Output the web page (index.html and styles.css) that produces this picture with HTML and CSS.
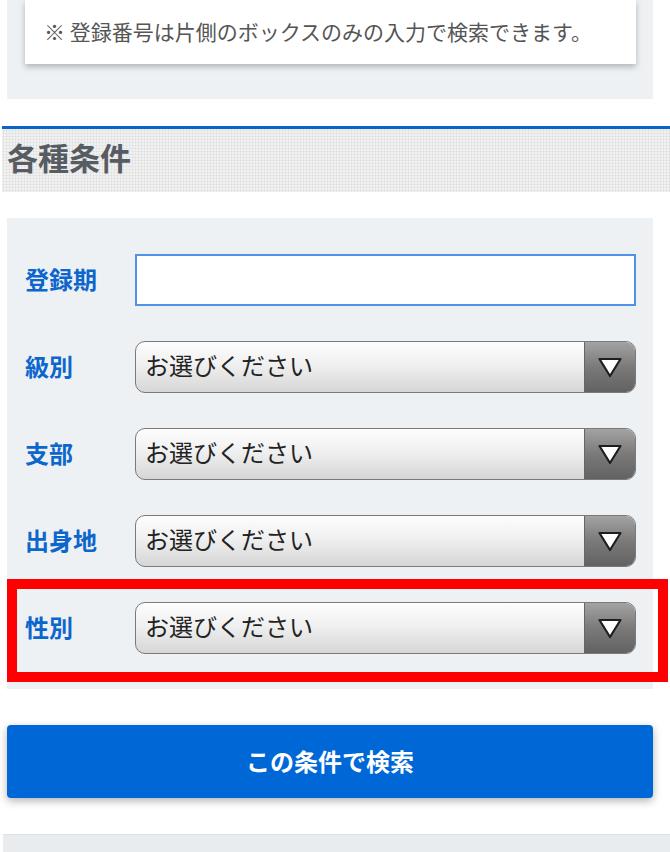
FILE: index.html
```html
<!DOCTYPE html>
<html lang="ja">
<head>
<meta charset="UTF-8">
<meta name="viewport" content="width=device-width, initial-scale=1.0">
<title>各種条件</title>
<link rel="stylesheet" href="styles.css">
</head>
<body>
  <div class="note-panel">
    <div class="note-card">
      <p>※ 登録番号は片側のボックスのみの入力で検索できます。</p>
    </div>
  </div>

  <h2 class="section-title">各種条件</h2>

  <form class="cond-panel" onsubmit="return false">
    <div class="row">
      <label class="row-label" for="term">登録期</label>
      <input class="text-input" type="text" id="term">
    </div>
    <div class="row">
      <label class="row-label" for="grade">級別</label>
      <div class="select-box">
        <select id="grade"><option>お選びください</option></select>
        <span class="select-arrow"><svg width="26" height="24" viewBox="0 0 26 24"><path d="M2.5 4 L23.5 4 L13 21 Z" fill="#fff" stroke="#1e1e1e" stroke-width="2.2" stroke-linejoin="round"/></svg></span>
      </div>
    </div>
    <div class="row">
      <label class="row-label" for="branch">支部</label>
      <div class="select-box">
        <select id="branch"><option>お選びください</option></select>
        <span class="select-arrow"><svg width="26" height="24" viewBox="0 0 26 24"><path d="M2.5 4 L23.5 4 L13 21 Z" fill="#fff" stroke="#1e1e1e" stroke-width="2.2" stroke-linejoin="round"/></svg></span>
      </div>
    </div>
    <div class="row">
      <label class="row-label" for="home">出身地</label>
      <div class="select-box">
        <select id="home"><option>お選びください</option></select>
        <span class="select-arrow"><svg width="26" height="24" viewBox="0 0 26 24"><path d="M2.5 4 L23.5 4 L13 21 Z" fill="#fff" stroke="#1e1e1e" stroke-width="2.2" stroke-linejoin="round"/></svg></span>
      </div>
    </div>
    <div class="row">
      <label class="row-label" for="sex">性別</label>
      <div class="select-box">
        <select id="sex"><option>お選びください</option></select>
        <span class="select-arrow"><svg width="26" height="24" viewBox="0 0 26 24"><path d="M2.5 4 L23.5 4 L13 21 Z" fill="#fff" stroke="#1e1e1e" stroke-width="2.2" stroke-linejoin="round"/></svg></span>
      </div>
    </div>
    <!-- 注目枠 -->
    <div class="highlight"></div>
  </form>

  <button class="search-btn" type="button">この条件で検索</button>

  <div class="bottom-panel"></div>
</body>
</html>
```

FILE: styles.css
```css
:root {
  --blue: #0068d6;
  --panel: #edf1f4;
  --label: #0c66cc;
}

body {
  margin: 0;
  width: 670px;
  font-family: "Noto Sans CJK JP", "Noto Sans", sans-serif;
  background: #fff;
  color: #333;
}

.note-panel {
  margin: 0 17px 0 7px;
  padding: 0 17px 35px 18px;
  background: var(--panel);
}

.note-card {
  background: #fff;
  height: 64px;
  box-shadow: 0 3px 6px rgba(0,0,0,0.25);
  display: flex;
  align-items: center;
  padding-left: 19px;
}

.note-card p {
  margin: 0;
  font-size: 21px;
  color: #555;
  margin-top: -2px;
}

.section-title {
  margin: 27px 0 0 2px;
  height: 63px;
  border-top: 3px solid #0a63cc;
  background-color: #f1f1f1;
  background-image: radial-gradient(#dedede 0.9px, transparent 1.1px);
  background-size: 3px 3px;
  font-size: 31px;
  font-weight: bold;
  color: #575c62;
  line-height: 56px;
  padding-left: 5px;
}

.cond-panel {
  position: relative;
  margin: 26px 17px 0 7px;
  padding: 36px 17px 35px 18px;
  background: var(--panel);
  display: flex;
  flex-direction: column;
  gap: 35px;
}

.row {
  display: flex;
  align-items: center;
  height: 52px;
}

.row-label {
  width: 110px;
  flex: none;
  font-size: 24px;
  font-weight: bold;
  color: var(--label);
  margin-top: -4px;
}

.text-input {
  flex: 1;
  height: 52px;
  box-sizing: border-box;
  border: 2px solid #4d94e6;
  background: #fff;
  font-size: 20px;
  outline: none;
}

.select-box {
  flex: 1;
  height: 52px;
  box-sizing: border-box;
  display: flex;
  border: 1px solid #7a7a7a;
  border-radius: 10px;
  overflow: hidden;
  background: linear-gradient(#fdfdfd, #f0f0f0 45%, #d6d6d6);
}

.select-box select {
  flex: 1;
  appearance: none;
  -webkit-appearance: none;
  border: none;
  background: transparent;
  font-family: inherit;
  font-size: 24px;
  color: #222;
  padding: 0 0 5px 9px;
  outline: none;
}

.select-arrow {
  width: 50px;
  flex: none;
  display: flex;
  align-items: center;
  justify-content: center;
  border-left: 1px solid #666;
  background: linear-gradient(#a3a3a3, #7a7a7a 50%, #626262);
}

.highlight {
  position: absolute;
  left: 0;
  top: 361px;
  width: 641px;
  height: 83px;
  border: 10px solid #ff0000;
  pointer-events: none;
}

.search-btn {
  display: block;
  margin: 36px 17px 0 7px;
  width: 646px;
  height: 73px;
  border: none;
  border-radius: 4px;
  background: var(--blue);
  color: #fff;
  font-family: inherit;
  font-size: 24px;
  font-weight: bold;
  padding-bottom: 4px;
  box-shadow: 0 3px 8px rgba(0,0,0,0.3);
  cursor: pointer;
}

.bottom-panel {
  margin: 36px 0 0 3px;
  height: 40px;
  background: #e8ecef;
  border-top: 1px solid #dde2e6;
}
```
